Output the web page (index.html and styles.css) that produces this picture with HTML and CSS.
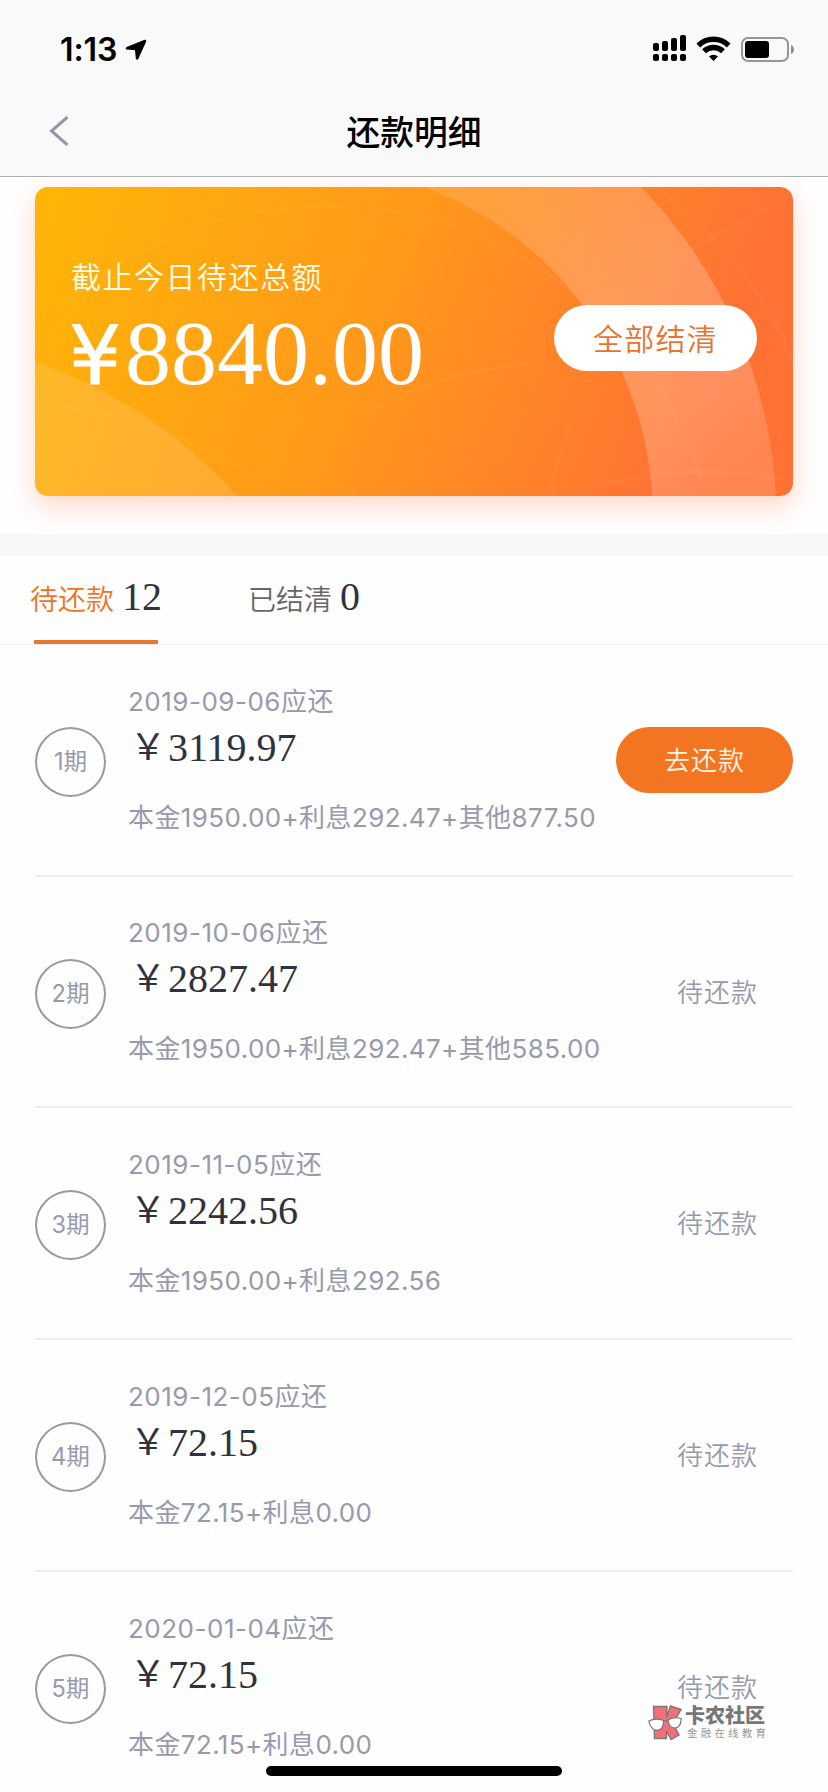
FILE: index.html
```html
<!DOCTYPE html>
<html lang="zh-CN">
<head>
<meta charset="utf-8">
<title>还款明细</title>
<link rel="stylesheet" href="styles.css">
</head>
<body>
<header class="header">
  <div class="status">
    <div class="status-left">
      <span class="time">1:13</span>
      <svg class="loc" viewBox="0 0 22 22"><path d="M19.6 .8 L1.6 8 Q-.4 9.6 1.8 10.6 L10 11.2 L10.800 19.6 Q12 22 13.400 19.800 L21.200 2.600 Q21.400 .4 19.600 .8Z"/></svg>
    </div>
    <svg class="status-icons" viewBox="0 0 144 30">
      <g>
        <rect x="1" y="9" width="6" height="8" rx="2"/><rect x="10" y="7" width="6" height="10" rx="2"/><rect x="19" y="4" width="6" height="13" rx="2"/><rect x="28" y="1" width="6" height="16" rx="2"/>
        <rect x="1" y="20" width="6" height="7" rx="2"/><rect x="10" y="20" width="6" height="7" rx="2"/><rect x="19" y="20" width="6" height="7" rx="2"/><rect x="28" y="20" width="6" height="7" rx="2"/>
      </g>
      <g class="wifi"><path d="M46.300 11.500 A21.600 21.600 0 0 1 76.700 11.500"/><path d="M52 17.300 A13.600 13.600 0 0 1 71 17.300"/></g>
      <path d="M57 22.600 A6.600 6.600 0 0 1 66 22.600 L61.500 27Z"/>
      <rect class="battery" x="90" y="4" width="46" height="23" rx="6"/>
      <rect x="93" y="7" width="24" height="17" rx="3"/>
      <path class="nub" d="M139 11 Q142 12.200 142 15.500 Q142 18.800 139 20Z"/>
    </svg>
  </div>
  <nav class="nav">
    <svg class="back" viewBox="0 0 20 30"><path d="M18.500 1 L2.500 15 L18.500 29"/></svg>
    <h1 class="title">还款明细</h1>
  </nav>
</header>
<section class="summary">
  <div class="card">
    <svg class="card-art" viewBox="0 0 758 309">
      <defs>
        <linearGradient id="band" x1="400" y1="0" x2="680" y2="309" gradientUnits="userSpaceOnUse"><stop offset="0" stop-color="#fff" stop-opacity=".12"/><stop offset=".55" stop-color="#fff" stop-opacity=".22"/><stop offset=".8" stop-color="#fff" stop-opacity=".21"/><stop offset="1" stop-color="#fff" stop-opacity=".14"/></linearGradient>
      </defs>
      <path fill="url(#band)" d="M389 0 A349 349 0 0 1 617 309 H741 A480 480 0 0 0 606 0Z"/>
      <path class="blob" d="M0 175 A480 480 0 0 1 202 309 H0Z"/>
      <g class="lines">
        <path d="M15 133 A392 392 0 0 1 666 293"/>
        <path d="M328 230 Q412 178 512 176"/>
        <path d="M539 306 Q640 272 758 293"/>
        <path d="M620 0 Q718 72 758 176"/>
        <path d="M656 63 L752 10"/>
        <path d="M18 218 Q130 232 225 293"/>
        <path d="M517 309 Q522 258 546 216"/>
      </g>
    </svg>
    <div class="card-info">
      <p class="card-label">截止今日待还总额</p>
      <p class="card-amount"><span class="yen">¥</span>8840.00</p>
    </div>
    <button class="settle">全部结清</button>
  </div>
</section>
<nav class="tabs">
  <div class="tab active"><span>待还款</span><b class="count">12</b></div>
  <div class="tab"><span>已结清</span><b class="count">0</b></div>
</nav>
<main class="list">
  <article class="row">
    <div class="term">1期</div>
    <div class="info"><p class="date">2019-09-06应还</p><p class="amount"><span class="cny">￥</span>3119.97</p><p class="detail">本金1950.00+利息292.47+其他877.50</p></div>
    <button class="pay">去还款</button>
  </article>
  <article class="row">
    <div class="term">2期</div>
    <div class="info"><p class="date">2019-10-06应还</p><p class="amount"><span class="cny">￥</span>2827.47</p><p class="detail">本金1950.00+利息292.47+其他585.00</p></div>
    <span class="state">待还款</span>
  </article>
  <article class="row">
    <div class="term">3期</div>
    <div class="info"><p class="date">2019-11-05应还</p><p class="amount"><span class="cny">￥</span>2242.56</p><p class="detail">本金1950.00+利息292.56</p></div>
    <span class="state">待还款</span>
  </article>
  <article class="row">
    <div class="term">4期</div>
    <div class="info"><p class="date">2019-12-05应还</p><p class="amount"><span class="cny">￥</span>72.15</p><p class="detail">本金72.15+利息0.00</p></div>
    <span class="state">待还款</span>
  </article>
  <article class="row">
    <div class="term">5期</div>
    <div class="info"><p class="date">2020-01-04应还</p><p class="amount"><span class="cny">￥</span>72.15</p><p class="detail">本金72.15+利息0.00</p></div>
    <span class="state">待还款</span>
  </article>
</main>
<div class="watermark">
  <svg class="mark" viewBox="0 0 34 36">
    <path class="k" d="M5.500 1.500 H19 L18.500 12 L22.500 1 L33 4.500 L25 18.500 L31 30 L23 34.500 L18.500 26 V33.500 H6.500Z"/>
    <path class="lens" d="M.8 16 Q8 12.500 15.500 15.500 Q16 25 9 25.300 Q2.500 25 .8 16Z M20 15 Q26 11.500 33.200 13.500 Q33 22.500 27 23 Q21 23 20 15Z M15.500 16 L20 15.200"/>
  </svg>
  <div><p class="wm-name">卡农社区</p><p class="wm-sub">金融在线教育</p></div>
</div>
<div class="home-bar"></div>
</body>
</html>
```
FILE: styles.css
```css
* { box-sizing: border-box; margin: 0; padding: 0; }
body { position: relative; width: 828px; height: 1792px; overflow: hidden; background: #fefefe; font-family: Inter, "Noto Sans CJK SC", sans-serif; color: #989aac; }
button { border: 0; font-family: inherit; }
.header { height: 177px; background: #f9f9f9; border-bottom: 1px solid #b0b0b0; }
.status { display: flex; justify-content: space-between; height: 88px; padding: 34px 32px 0 60px; }
.status-left { display: flex; gap: 8px; height: 31px; }
.time { font-size: 32px; font-weight: 600; line-height: 31px; letter-spacing: -.1px; color: #000; }
.loc { width: 22px; height: 22px; margin-top: 5px; }
.status-icons { width: 144px; height: 30px; }
.wifi { fill: none; stroke: #000; stroke-width: 5.4; }
.battery { fill: none; stroke: #979797; stroke-width: 2; }
.nub { fill: #8d8d8d; }
.nav { display: grid; grid-template-columns: 49px 1fr 49px; align-items: center; height: 88px; }
.back { grid-column: 2; grid-row: 1; width: 20px; height: 30px; margin-bottom: 2px; fill: none; stroke: #9696aa; stroke-width: 3; }
.title { grid-column: 2; grid-row: 1; padding-top: 2px; text-align: center; font-size: 33.8px; font-weight: 500; line-height: 50px; color: #000; }
.summary { height: 379px; padding: 10px 35px 0; border-bottom: 22px solid #f7f8fa; overflow: hidden; }
.card { position: relative; display: flex; justify-content: space-between; height: 309px; padding: 0 36px; border-radius: 13px; background: linear-gradient(112deg, #ffb607 0%, #ff991a 44%, #ff7234 85%); box-shadow: 0 10px 26px rgba(255, 112, 50, .27); }
.card-art { position: absolute; inset: 0; width: 758px; height: 309px; border-radius: 13px; }
.blob { fill: rgba(255, 255, 255, .12); }
.lines { fill: none; stroke: rgba(255, 255, 255, .035); stroke-width: 4; }
.card-info { position: relative; padding-top: 68px; }
.card-label { font-size: 30px; font-weight: 350; line-height: 44px; letter-spacing: 1.5px; color: #fffde8; }
.card-amount { display: flex; margin: 2px 0 0 -2px; font-family: "Liberation Serif", serif; font-size: 92px; line-height: 104px; color: #fff; }
.yen { width: 56px; padding-top: 3px; font-family: "DejaVu Sans", sans-serif; font-size: 82px; -webkit-text-stroke: 1px #fff; }
.settle { position: relative; width: 203px; height: 66px; margin-top: 118px; padding-bottom: 3px; border-radius: 33px; background: #fff; font-size: 30px; font-weight: 350; letter-spacing: 1.3px; color: #e8722e; }
.tabs { display: flex; gap: 86px; height: 89px; padding-left: 30px; border-bottom: 1px solid #f3f3f4; }
.tab { position: relative; display: flex; align-items: baseline; height: 88px; padding-top: 17px; font-size: 28px; font-weight: 350; line-height: 50px; color: #666; }
.tab.active { color: #ee7425; }
.tab.active::after { content: ""; position: absolute; left: 4px; bottom: 0; width: 124px; height: 4px; background: #e8762d; }
.count { margin: -1px 0 1px 8px; font-family: "Liberation Serif", serif; font-size: 40px; font-weight: 400; color: #30323f; }
.list { padding: 0 35px; }
.row { display: flex; height: 231.7px; border-bottom: 2px solid #ededee; }
.term { width: 71px; height: 70px; margin-top: 82px; border: 2px solid #9799aa; border-radius: 50%; text-align: center; font-size: 23.6px; line-height: 66px; }
.info { flex: 1; padding: 36.8px 0 0 22px; white-space: nowrap; }
.date, .detail { font-size: 26px; line-height: 40px; letter-spacing: .5px; }
.amount { display: flex; font-family: "Liberation Serif", serif; font-size: 40px; line-height: 52px; color: #30323f; }
.cny { width: 40px; height: 48px; padding-left: 2px; font-family: "Noto Sans CJK SC", sans-serif; font-size: 36px; line-height: 45px; }
.detail { margin-top: 24px; letter-spacing: .4px; }
.pay { width: 177px; height: 66px; margin-top: 82px; padding-bottom: 4px; border-radius: 33px; background: #f37421; font-size: 26px; font-weight: 350; letter-spacing: 1px; color: #fff6e2; }
.state { margin: 96px 35px 0 0; font-size: 26px; font-weight: 350; line-height: 40px; letter-spacing: 1px; }
.watermark { position: absolute; left: 648px; top: 1705px; display: flex; gap: 3px; }
.mark { width: 34px; height: 36px; }
.k { fill: #ef7078; stroke: #807777; stroke-width: 1.4; }
.lens { fill: #fff; stroke: #777; stroke-width: 1.2; }
.wm-name { font-size: 20px; font-weight: 900; line-height: 22px; color: #777; }
.wm-sub { margin-left: 2px; font-size: 10.5px; line-height: 14px; letter-spacing: 3.2px; color: #999; }
.home-bar { position: absolute; left: 266px; top: 1766px; width: 296px; height: 10px; border-radius: 5px; background: #000; }
```
